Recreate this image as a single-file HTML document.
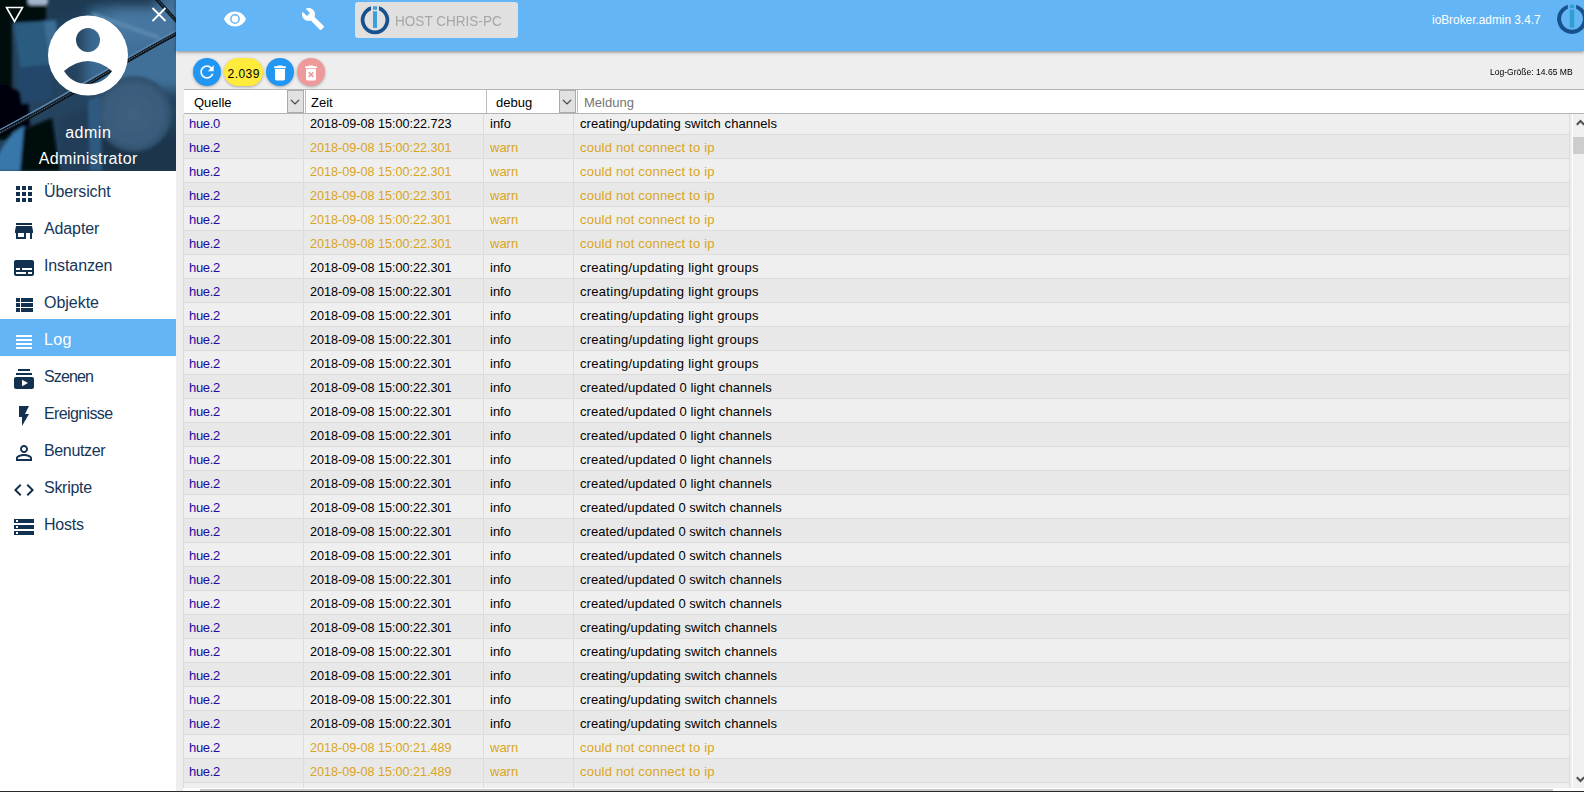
<!DOCTYPE html>
<html><head><meta charset="utf-8"><style>
*{margin:0;padding:0;box-sizing:border-box}
html,body{width:1584px;height:792px;overflow:hidden;background:#eeeeee;font-family:"Liberation Sans",sans-serif}
.abs{position:absolute}
#side{position:absolute;left:0;top:0;width:176px;height:792px;background:#fff}
#hdrimg{position:absolute;left:0;top:0;width:176px;height:171px;overflow:hidden;background:#1c3a55}
.nav{position:absolute;left:0;width:176px;height:37px;color:#0f2942;font-size:16px}
.nav .t{position:absolute;left:44px;top:12px;white-space:nowrap}
.nav svg{position:absolute;left:12px;top:6px}
.nav.act{background:#64b5f6;color:#fff}
#topbar{position:absolute;left:176px;top:0;width:1408px;height:51px;background:#64b5f6;box-shadow:0 1px 3px rgba(0,0,0,0.38),0 2px 5px rgba(0,0,0,0.08)}
.fab{position:absolute;top:58px;width:28px;height:28px;border-radius:14px;background:#2196f3;box-shadow:0 1px 3px rgba(0,0,0,0.3)}
#thead{position:absolute;left:184px;top:89px;width:1400px;height:25px;background:#fff;border-top:1px solid #b4b4b4;border-bottom:1px solid #b4b4b4}
.th{position:absolute;top:0;height:23px;font-size:13px;color:#000}
.dd{position:absolute;top:0;width:17px;height:23px;background:#e1e1e1;border:1px solid #ababab}
.vl{position:absolute;top:0;width:1px;height:23px;background:#bdbdbd}
#tbody{position:absolute;left:183px;top:114px;width:1387px;height:674px;overflow:hidden;border-left:1px solid #dadada}
.r{position:absolute;left:0;width:1386px;height:24px;border-bottom:1px solid #dcdcdc;font-size:13px;white-space:nowrap}
.r.o{background:#efefef}
.r.e{background:#e8e8e8}
.r span{position:absolute;top:0;height:23px;line-height:25px;padding-left:6px;border-right:1px solid #dcdcdc}
.c1{left:0;width:120px;color:#1b0c9c}
.c2{left:120px;width:180px;color:#000}
.c3{left:300px;width:90px;color:#000}
.c4{left:390px;width:996px;color:#000}
.r.w .c2,.r.w .c3,.r.w .c4{color:#daa520}
#vsb{position:absolute;left:1572px;top:114px;width:12px;height:674px;background:#f0f0f0;border-left:1px solid #fff}
#hsb{position:absolute;left:183px;top:788px;width:1401px;height:3px;background:#fff}
#bot{position:absolute;left:0;top:791px;width:1584px;height:1px;background:#2b2b2b}
.dd{top:90px;width:17px;height:23px}
.vl{top:90px}
.th{top:90px;line-height:23px}
.ut{left:0;width:176px;text-align:center;color:#fff;font-size:16px;white-space:nowrap}
.nav svg{left:12px;top:11px;fill:#12304f}
.nav.act svg{fill:#fff}
.nav{color:#163659}
.nav.act{color:#fff}
.c2{font-size:12.6px;line-height:26px !important}
.c1{letter-spacing:-0.35px}
.th{line-height:25px}
.c1{padding-left:5px !important}

</style></head><body>
<div id="side">
  <div id="hdrimg">
    <svg class="abs" style="left:0;top:0" width="176" height="171" viewBox="0 0 176 171">
      <defs>
        <filter id="bl" x="-20%" y="-20%" width="140%" height="140%"><feGaussianBlur stdDeviation="1.8"/></filter>
        <filter id="bl2" x="-20%" y="-20%" width="140%" height="140%"><feGaussianBlur stdDeviation="6"/></filter>
        <radialGradient id="rg1" cx="0.5" cy="0.5" r="0.5"><stop offset="0" stop-color="#40617f"/><stop offset="0.8" stop-color="#395b7a"/><stop offset="1" stop-color="#2d4d69"/></radialGradient>
      </defs>
      <rect width="176" height="171" fill="#24435e"/>
      <g filter="url(#bl2)">
        <rect x="85" y="-10" width="110" height="100" fill="#3b6a92"/>
        <rect x="110" y="5" width="80" height="40" fill="#4777a0"/>
        <rect x="120" y="40" width="70" height="50" fill="#3f6f98"/>
        <rect x="80" y="130" width="110" height="50" fill="#1d344b"/>
        <rect x="40" y="-10" width="50" height="30" fill="#1f3a52"/><rect x="88" y="-10" width="70" height="18" fill="#1b344d"/>
      </g>
      <g filter="url(#bl)">
        <path d="M-5 -5H46V22H12V140H-5Z" fill="#04070b"/><path d="M92 12L160 36L160 40L92 16Z" fill="#5b8ab0"/>
        <path d="M-5 84Q12 86 28 96L30 126L0 136Z" fill="#03060a"/>
        <path d="M22 130L52 118L60 171H20Z" fill="#04080c"/>
        <path d="M14 24L54 20L58 64L20 68Z" fill="#2c5b80"/>
        <path d="M44 22L56 20L60 62L50 64Z" fill="#3a6d95"/>
        <path d="M16 68L50 64L52 98L22 104Z" fill="#22476a"/>
        <path d="M-2 156Q8 134 24 126L20 171H-2Z" fill="#3977aa"/>
        <rect x="28" y="-3" width="20" height="8" rx="3" fill="#a2b6cc"/>
        <circle cx="134" cy="114" r="38" fill="url(#rg1)"/>
        <path d="M58 120L96 104L96 171L62 171Z" fill="#203d58"/>
        <path d="M88 100L100 96L102 171L90 171Z" fill="#2f5a80"/>
      </g>
      <path d="M0 131 C60 100 120 62 176 32 L176 36 C120 66 60 104 0 135Z" fill="#0c141c"/>
      <path d="M0 132.6 C60 101.6 120 63.6 176 33.6" fill="none" stroke="#6d8396" stroke-width="1" stroke-dasharray="1 1"/><path d="M0 129.6 C60 98.6 120 60.6 176 30.6" fill="none" stroke="#5f88ad" stroke-width="1.2"/>
      <path d="M158 -2L176 18L176 23L153 -2Z" fill="#0f1a24"/><path d="M156 -2L176 20.5" stroke="#6f8599" stroke-width="0.8" stroke-dasharray="1 1"/>
    </svg>
    <svg class="abs" style="left:48px;top:15px" width="80" height="81" viewBox="0 0 80 81">
      <path fill="#fff" fill-rule="evenodd" d="M40 0.5A40 40 0 1 1 40 80.5A40 40 0 1 1 40 0.5Z M40 13A12 12 0 1 0 40 37A12 12 0 1 0 40 13Z M16 56Q40 36 64 56Q56 69 40 69Q24 69 16 56Z"/>
    </svg>
    <svg class="abs" style="left:5px;top:6px" width="19" height="17" viewBox="0 0 19 17"><path d="M1.5 1.5H17.5L9.5 15.5Z" fill="none" stroke="#fff" stroke-width="1.6"/></svg>
    <svg class="abs" style="left:151px;top:7px" width="16" height="15" viewBox="0 0 16 15"><path d="M1.5 1L14.5 14M14.5 1L1.5 14" stroke="#fff" stroke-width="1.8"/></svg>
    <div class="abs ut" style="top:124px;letter-spacing:0.5px;text-indent:0.5px">admin</div>
    <div class="abs ut" style="top:150px;letter-spacing:0.35px;text-indent:0.35px">Administrator</div>
  </div>
  <div class="nav" style="top:171px"><svg width="24" height="24" viewBox="0 0 24 24"><path d="M4 8h4V4H4v4zm6 12h4v-4h-4v4zm-6 0h4v-4H4v4zm0-6h4v-4H4v4zm6 0h4v-4h-4v4zm6-10v4h4V4h-4zm-6 4h4V4h-4v4zm6 6h4v-4h-4v4zm0 6h4v-4h-4v4z"/></svg><span class="t" style="letter-spacing:-0.11px">Übersicht</span></div>
  <div class="nav" style="top:208px"><svg width="24" height="24" viewBox="0 0 24 24"><path d="M20 4H4v2h16V4zm1 10v-2l-1-5H4l-1 5v2h1v6h10v-6h4v6h2v-6h1zm-9 4H6v-4h6v4z"/></svg><span class="t" style="letter-spacing:-0.12px">Adapter</span></div>
  <div class="nav" style="top:245px"><svg width="24" height="24" viewBox="0 0 24 24"><path d="M20 4H4c-1.1 0-2 .9-2 2v12c0 1.1.9 2 2 2h16c1.1 0 2-.9 2-2V6c0-1.100-.9-2-2-2zM4 12h4v2H4v-2zm10 6H4v-2h10v2zm6 0h-4v-2h4v2zm0-4H10v-2h10v2z"/></svg><span class="t" style="letter-spacing:-0.11px">Instanzen</span></div>
  <div class="nav" style="top:282px"><svg width="24" height="24" viewBox="0 0 24 24"><path d="M4 14h4v-4H4v4zm0 5h4v-4H4v4zM4 9h4V5H4v4zm5 5h12v-4H9v4zm0 5h12v-4H9v4zM9 5v4h12V5H9z"/></svg><span class="t" style="letter-spacing:-0.03px">Objekte</span></div>
  <div class="nav act" style="top:319px"><svg width="24" height="24" viewBox="0 0 24 24"><path d="M4 15h16v-2H4v2zm0 4h16v-2H4v2zm0-8h16V9H4v2zm0-6v2h16V5H4z"/></svg><span class="t" style="letter-spacing:0.3px">Log</span></div>
  <div class="nav" style="top:356px"><svg width="24" height="24" viewBox="0 0 24 24"><path d="M20 8H4V6h16v2zm-2-6H6v2h12V2zm4 10v8c0 1.1-.9 2-2 2H4c-1.1 0-2-.9-2-2v-8c0-1.1.9-2 2-2h16c1.1 0 2 .9 2 2zm-6 4l-6-3.27v6.53L16 16z"/></svg><span class="t" style="letter-spacing:-0.88px">Szenen</span></div>
  <div class="nav" style="top:393px"><svg width="24" height="24" viewBox="0 0 24 24"><path d="M7 2v11h3v9l7-12h-4l4-8z"/></svg><span class="t" style="letter-spacing:-0.62px">Ereignisse</span></div>
  <div class="nav" style="top:430px"><svg width="24" height="24" viewBox="0 0 24 24"><path d="M12 5.9c1.16 0 2.1.94 2.1 2.1s-.94 2.1-2.1 2.1S9.900 9.16 9.9 8s.94-2.1 2.1-2.1m0 9c2.97 0 6.1 1.46 6.1 2.1v1.1H5.9V17c0-.64 3.13-2.1 6.1-2.1M12 4C9.79 4 8 5.79 8 8s1.79 4 4 4 4-1.79 4-4-1.79-4-4-4zm0 9c-2.67 0-8 1.34-8 4v3h16v-3c0-2.66-5.33-4-8-4z"/></svg><span class="t" style="letter-spacing:-0.36px">Benutzer</span></div>
  <div class="nav" style="top:467px"><svg width="24" height="24" viewBox="0 0 24 24"><path d="M9.4 16.6L4.8 12l4.6-4.6L8 6l-6 6 6 6 1.4-1.4zm5.2 0l4.6-4.6-4.6-4.6L16 6l6 6-6 6-1.4-1.4z"/></svg><span class="t" style="letter-spacing:-0.28px">Skripte</span></div>
  <div class="nav" style="top:504px"><svg width="24" height="24" viewBox="0 0 24 24"><path d="M2 20h20v-4H2v4zm2-3h2v2H4v-2zM2 4v4h20V4H2zm4 3H4V5h2v2zm-4 7h20v-4H2v4zm2-3h2v2H4v-2z"/></svg><span class="t" style="letter-spacing:-0.25px">Hosts</span></div>
</div>
<div id="topbar"></div>
<svg class="abs" style="left:223px;top:7px" width="24" height="24" viewBox="0 0 24 24"><path fill="#fff" fill-rule="evenodd" d="M12 4.5C7 4.5 2.73 7.61 1 12c1.73 4.39 6 7.5 11 7.5s9.27-3.11 11-7.5c-1.73-4.39-6-7.5-11-7.5zM12 7.1A4.9 4.9 0 1 0 12 16.9A4.9 4.9 0 1 0 12 7.1Z"/><circle cx="12" cy="12" r="3.4" fill="#fff"/></svg>
<svg class="abs" style="left:301px;top:7px" width="24" height="24" viewBox="0 0 24 24"><path fill="#fff" d="M22.7 19l-9.1-9.1c.9-2.3.4-5-1.5-6.900-2-2-5-2.4-7.4-1.3L9 6 6 9 1.6 4.7C.4 7.100.9 10.1 2.9 12.1c1.9 1.9 4.6 2.4 6.9 1.5l9.1 9.1c.4.4 1 .4 1.4 0l2.3-2.3c.5-.4.5-1.100.1-1.4z"/></svg>
<div class="abs" style="left:355px;top:2px;width:163px;height:36px;background:#e0e0e0;border-radius:3px"></div>
<svg class="abs" style="left:360px;top:5px" width="30" height="30" viewBox="-15 -15 30 30"><path fill="#17508c" d="M-4 -13.68A14.25 14.25 0 1 0 4 -13.68L4 -9.71A10.5 10.5 0 1 1 -4 -9.71Z"/><rect x="-2" y="-13.7" width="4" height="3.4" fill="#3aa0dc"/><rect x="-2" y="-8.7" width="4" height="16.6" fill="#3aa0dc"/></svg>
<div class="abs" style="left:395px;top:13px;font-size:14.5px;color:#a6a6a6;white-space:nowrap;transform:scaleX(0.935);transform-origin:0 0">HOST CHRIS-PC</div>
<div class="abs" style="left:1432px;top:13px;font-size:11.85px;color:#fff;white-space:nowrap">ioBroker.admin 3.4.7</div>
<svg class="abs" style="left:1556px;top:3px" width="32" height="32" viewBox="-16 -16 32 32"><path fill="#17508c" d="M-4.2 -14.3A14.9 14.9 0 1 0 4.2 -14.3L4.2 -10.2A10.9 10.9 0 1 1 -4.2 -10.2Z"/><rect x="-2.2" y="-14.3" width="4.4" height="3.4" fill="#2f9fd0"/><rect x="-2.2" y="-9.3" width="4.4" height="18" fill="#2f9fd0"/></svg>
<div class="fab" style="left:193px"><svg class="abs" style="left:4px;top:4.2px" width="20" height="20" viewBox="0 0 24 24"><path fill="#fff" d="M17.65 6.35C16.2 4.9 14.21 4 12 4c-4.42 0-7.99 3.58-7.99 8s3.57 8 7.99 8c3.73 0 6.84-2.55 7.73-6h-2.08c-.82 2.33-3.04 4-5.65 4-3.31 0-6-2.69-6-6s2.69-6 6-6c1.66 0 3.14.69 4.22 1.78L13 11h7V4l-2.35 2.35z"/></svg></div>
<div class="fab" style="left:224px;width:39px;background:#ffeb3b"><div class="abs" style="left:0;top:0;width:39px;top:2px;line-height:28px;text-align:center;font-size:12px;letter-spacing:0.45px;text-indent:0.45px;color:#000">2.039</div></div>
<div class="fab" style="left:266px"><svg class="abs" style="left:4px;top:4.5px" width="20" height="20" viewBox="0 0 24 24"><path fill="#fff" d="M6 19c0 1.1.9 2 2 2h8c1.1 0 2-.9 2-2V7H6v12zM19 4h-3.5l-1-1h-5l-1 1H5v2h14V4z"/></svg></div>
<div class="fab" style="left:297px;background:#ef9a9a"><svg class="abs" style="left:4px;top:4.5px" width="20" height="20" viewBox="0 0 24 24"><path fill="#fff" d="M6 19c0 1.1.9 2 2 2h8c1.1 0 2-.9 2-2V7H6v12zm2.46-7.12l1.41-1.41L12 12.59l2.12-2.12 1.41 1.41L13.410 14l2.12 2.12-1.41 1.41L12 15.41l-2.12 2.12-1.41-1.41L10.59 14l-2.13-2.12zM15.5 4l-1-1h-5l-1 1H5v2h14V4z"/></svg></div>
<div class="abs" style="left:1490px;top:66px;font-size:9.75px;color:#000;white-space:nowrap;transform:scaleX(0.877);transform-origin:0 0">Log-Größe: 14.65 MB</div>
<div id="thead"></div>
<div class="dd" style="left:287px"><svg class="abs" style="left:2px;top:8px" width="10" height="6" viewBox="0 0 10 6"><path d="M0.9 0.9L5 4.9L9.1 0.9" fill="none" stroke="#444" stroke-width="1.3"/></svg></div>
<div class="vl" style="left:305px"></div>
<div class="dd" style="left:559px"><svg class="abs" style="left:2px;top:8px" width="10" height="6" viewBox="0 0 10 6"><path d="M0.9 0.9L5 4.9L9.1 0.9" fill="none" stroke="#444" stroke-width="1.3"/></svg></div>
<div class="vl" style="left:486px"></div>
<div class="vl" style="left:577px"></div>
<div class="th" style="left:194px">Quelle</div>
<div class="th" style="left:311px">Zeit</div>
<div class="th" style="left:496px">debug</div>
<div class="th" style="left:584px;color:#757575">Meldung</div>
<div id="tbody">
<div class="r o" style="top:-3px"><span class="c1">hue.0</span><span class="c2">2018-09-08 15:00:22.723</span><span class="c3">info</span><span class="c4" style="letter-spacing:0.06px">creating/updating switch channels</span></div>
<div class="r e w" style="top:21px"><span class="c1">hue.2</span><span class="c2">2018-09-08 15:00:22.301</span><span class="c3">warn</span><span class="c4" style="letter-spacing:0.2px">could not connect to ip</span></div>
<div class="r o w" style="top:45px"><span class="c1">hue.2</span><span class="c2">2018-09-08 15:00:22.301</span><span class="c3">warn</span><span class="c4" style="letter-spacing:0.2px">could not connect to ip</span></div>
<div class="r e w" style="top:69px"><span class="c1">hue.2</span><span class="c2">2018-09-08 15:00:22.301</span><span class="c3">warn</span><span class="c4" style="letter-spacing:0.2px">could not connect to ip</span></div>
<div class="r o w" style="top:93px"><span class="c1">hue.2</span><span class="c2">2018-09-08 15:00:22.301</span><span class="c3">warn</span><span class="c4" style="letter-spacing:0.2px">could not connect to ip</span></div>
<div class="r e w" style="top:117px"><span class="c1">hue.2</span><span class="c2">2018-09-08 15:00:22.301</span><span class="c3">warn</span><span class="c4" style="letter-spacing:0.2px">could not connect to ip</span></div>
<div class="r o" style="top:141px"><span class="c1">hue.2</span><span class="c2">2018-09-08 15:00:22.301</span><span class="c3">info</span><span class="c4" style="letter-spacing:0.27px">creating/updating light groups</span></div>
<div class="r e" style="top:165px"><span class="c1">hue.2</span><span class="c2">2018-09-08 15:00:22.301</span><span class="c3">info</span><span class="c4" style="letter-spacing:0.27px">creating/updating light groups</span></div>
<div class="r o" style="top:189px"><span class="c1">hue.2</span><span class="c2">2018-09-08 15:00:22.301</span><span class="c3">info</span><span class="c4" style="letter-spacing:0.27px">creating/updating light groups</span></div>
<div class="r e" style="top:213px"><span class="c1">hue.2</span><span class="c2">2018-09-08 15:00:22.301</span><span class="c3">info</span><span class="c4" style="letter-spacing:0.27px">creating/updating light groups</span></div>
<div class="r o" style="top:237px"><span class="c1">hue.2</span><span class="c2">2018-09-08 15:00:22.301</span><span class="c3">info</span><span class="c4" style="letter-spacing:0.27px">creating/updating light groups</span></div>
<div class="r e" style="top:261px"><span class="c1">hue.2</span><span class="c2">2018-09-08 15:00:22.301</span><span class="c3">info</span><span class="c4" style="letter-spacing:0.12px">created/updated 0 light channels</span></div>
<div class="r o" style="top:285px"><span class="c1">hue.2</span><span class="c2">2018-09-08 15:00:22.301</span><span class="c3">info</span><span class="c4" style="letter-spacing:0.12px">created/updated 0 light channels</span></div>
<div class="r e" style="top:309px"><span class="c1">hue.2</span><span class="c2">2018-09-08 15:00:22.301</span><span class="c3">info</span><span class="c4" style="letter-spacing:0.12px">created/updated 0 light channels</span></div>
<div class="r o" style="top:333px"><span class="c1">hue.2</span><span class="c2">2018-09-08 15:00:22.301</span><span class="c3">info</span><span class="c4" style="letter-spacing:0.12px">created/updated 0 light channels</span></div>
<div class="r e" style="top:357px"><span class="c1">hue.2</span><span class="c2">2018-09-08 15:00:22.301</span><span class="c3">info</span><span class="c4" style="letter-spacing:0.12px">created/updated 0 light channels</span></div>
<div class="r o" style="top:381px"><span class="c1">hue.2</span><span class="c2">2018-09-08 15:00:22.301</span><span class="c3">info</span><span class="c4" style="letter-spacing:0.05px">created/updated 0 switch channels</span></div>
<div class="r e" style="top:405px"><span class="c1">hue.2</span><span class="c2">2018-09-08 15:00:22.301</span><span class="c3">info</span><span class="c4" style="letter-spacing:0.05px">created/updated 0 switch channels</span></div>
<div class="r o" style="top:429px"><span class="c1">hue.2</span><span class="c2">2018-09-08 15:00:22.301</span><span class="c3">info</span><span class="c4" style="letter-spacing:0.05px">created/updated 0 switch channels</span></div>
<div class="r e" style="top:453px"><span class="c1">hue.2</span><span class="c2">2018-09-08 15:00:22.301</span><span class="c3">info</span><span class="c4" style="letter-spacing:0.05px">created/updated 0 switch channels</span></div>
<div class="r o" style="top:477px"><span class="c1">hue.2</span><span class="c2">2018-09-08 15:00:22.301</span><span class="c3">info</span><span class="c4" style="letter-spacing:0.05px">created/updated 0 switch channels</span></div>
<div class="r e" style="top:501px"><span class="c1">hue.2</span><span class="c2">2018-09-08 15:00:22.301</span><span class="c3">info</span><span class="c4" style="letter-spacing:0.06px">creating/updating switch channels</span></div>
<div class="r o" style="top:525px"><span class="c1">hue.2</span><span class="c2">2018-09-08 15:00:22.301</span><span class="c3">info</span><span class="c4" style="letter-spacing:0.06px">creating/updating switch channels</span></div>
<div class="r e" style="top:549px"><span class="c1">hue.2</span><span class="c2">2018-09-08 15:00:22.301</span><span class="c3">info</span><span class="c4" style="letter-spacing:0.06px">creating/updating switch channels</span></div>
<div class="r o" style="top:573px"><span class="c1">hue.2</span><span class="c2">2018-09-08 15:00:22.301</span><span class="c3">info</span><span class="c4" style="letter-spacing:0.06px">creating/updating switch channels</span></div>
<div class="r e" style="top:597px"><span class="c1">hue.2</span><span class="c2">2018-09-08 15:00:22.301</span><span class="c3">info</span><span class="c4" style="letter-spacing:0.06px">creating/updating switch channels</span></div>
<div class="r o w" style="top:621px"><span class="c1">hue.2</span><span class="c2">2018-09-08 15:00:21.489</span><span class="c3">warn</span><span class="c4" style="letter-spacing:0.2px">could not connect to ip</span></div>
<div class="r e w" style="top:645px"><span class="c1">hue.2</span><span class="c2">2018-09-08 15:00:21.489</span><span class="c3">warn</span><span class="c4" style="letter-spacing:0.2px">could not connect to ip</span></div>
<div class="r o" style="top:669px"><span class="c1"></span><span class="c2"></span><span class="c3"></span><span class="c4" style="letter-spacing:0px"></span></div>
</div>
<div id="vsb"><div class="abs" style="left:0;top:23px;width:12px;height:17px;background:#cdcdcd"></div><svg class="abs" style="left:3px;top:5px" width="9" height="7" viewBox="0 0 9 7"><path d="M0.8 5.8L4.5 2L8.2 5.8" fill="none" stroke="#505050" stroke-width="2"/></svg><svg class="abs" style="left:3px;top:662px" width="9" height="7" viewBox="0 0 9 7"><path d="M0.8 1.2L4.5 5L8.2 1.2" fill="none" stroke="#505050" stroke-width="2"/></svg></div>
<div id="hsb"><div class="abs" style="left:17px;top:1px;width:1353px;height:2px;background:#c8c8c8"></div></div>
<div id="bot"></div>

</body></html>
